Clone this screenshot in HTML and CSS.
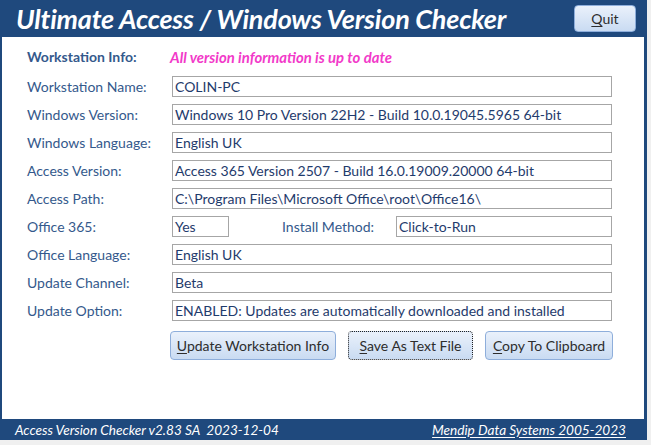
FILE: index.html
```html
<!DOCTYPE html>
<html>
<head>
<meta charset="utf-8">
<link rel="stylesheet" href="styles.css">
</head>
<body>
<div class="frame">
  <header class="titlebar">
    <h1 class="title">Ultimate Access / Windows Version Checker</h1>
    <button class="btn quit"><u>Q</u>uit</button>
  </header>
  <main class="content">
    <div class="grid">
      <div class="label head">Workstation Info:</div>
      <div class="status">All version information is up to date</div>

      <div class="label">Workstation Name:</div>
      <div class="box">COLIN-PC</div>

      <div class="label">Windows Version:</div>
      <div class="box">Windows 10 Pro Version 22H2 - Build 10.0.19045.5965 64-bit</div>

      <div class="label">Windows Language:</div>
      <div class="box">English UK</div>

      <div class="label">Access Version:</div>
      <div class="box">Access 365 Version 2507 - Build 16.0.19009.20000 64-bit</div>

      <div class="label">Access Path:</div>
      <div class="box">C:\Program Files\Microsoft Office\root\Office16\</div>

      <div class="label">Office 365:</div>
      <div class="split">
        <div class="box small">Yes</div>
        <div class="label inner">Install Method:</div>
        <div class="box grow">Click-to-Run</div>
      </div>

      <div class="label">Office Language:</div>
      <div class="box">English UK</div>

      <div class="label">Update Channel:</div>
      <div class="box">Beta</div>

      <div class="label">Update Option:</div>
      <div class="box">ENABLED: Updates are automatically downloaded and installed</div>
    </div>
    <div class="actions">
      <button class="btn b1"><u>U</u>pdate Workstation Info</button>
      <button class="btn b2 focus"><u>S</u>ave As Text File</button>
      <button class="btn b3"><u>C</u>opy To Clipboard</button>
    </div>
  </main>
  <footer class="footer">
    <span class="ver">Access Version Checker v2.83 SA&nbsp; 2023-12-04</span>
    <span class="credit">Mendip Data Systems 2005-2023</span>
  </footer>
</div>
</body>
</html>
```
FILE: styles.css
```css
html, body {
  margin: 0;
  padding: 0;
  background: #f0f0f0;
  width: 651px;
  height: 445px;
  overflow: hidden;
}
body {
  font-family: Lato, "Open Sans", sans-serif;
}
.frame {
  width: 642px;
  height: 440px;
  border-left: 2px solid #1f497d;
  border-right: 3px solid #1f497d;
  display: flex;
  flex-direction: column;
  background: #fff;
}
.titlebar {
  height: 37px;
  background: #1f497d;
  display: flex;
  align-items: flex-start;
  justify-content: space-between;
  flex: none;
}
.title {
  margin: 3px 0 0 14px;
  color: #fff;
  font-size: 27px;
  font-weight: 700;
  font-style: italic;
  line-height: 31px;
  letter-spacing: -0.2px;
}
.btn {
  font-family: Lato, "Open Sans", sans-serif;
  font-size: 14px;
  color: #2d2d2d;
  background: linear-gradient(#eaf1fb, #c9dbf2);
  border: 1px solid #8eaedb;
  border-radius: 4px;
  padding: 0;
  cursor: default;
}
.btn u { text-underline-offset: 2px; }
.quit {
  margin: 5px 8px 0 0;
  width: 62px;
  height: 27px;
}
.content {
  flex: 1;
  padding: 11px 0 0 25px;
}
.grid {
  display: grid;
  grid-template-columns: 145px 440px;
  grid-auto-rows: 21px;
  row-gap: 7px;
  align-items: center;
}
.head {
  font-weight: 700;
  color: #1f3864;
}
.status {
  color: #f23ac9;
  font-weight: 700;
  font-style: italic;
  margin-left: -2px;
  font-size: 14.9px !important;
}
.grid > .head, .grid > .status { margin-bottom: 4px; }
.label {
  font-size: 14px;
  color: #34598c;
  white-space: nowrap;
}
.head, .status { font-size: 14px; }
.box {
  height: 21px;
  box-sizing: border-box;
  border: 1px solid #a6a6a6;
  padding: 0 2px;
  font-size: 14px;
  line-height: 20px;
  color: #1f3b6c;
  white-space: nowrap;
  overflow: hidden;
}
.split {
  display: flex;
  align-items: center;
  height: 21px;
}
.small { width: 57px; flex: none; }
.inner { margin-left: 53px; width: 114px; flex: none; }
.grow { flex: 1; }
.actions {
  display: flex;
  gap: 12px;
  margin: 10px 0 0 143px;
}
.actions .btn { height: 29px; }
.b1 { width: 166px; }
.b2 { width: 125px; }
.b3 { width: 128px; }
.focus {
  border: 1px dotted #222;
}
.footer {
  height: 21px;
  flex: none;
  background: #1f497d;
  color: #fff;
  font-style: italic;
  font-size: 13.6px;
  display: flex;
  align-items: center;
  justify-content: space-between;
  padding: 0 18px 0 13px;
}
.credit { text-decoration: underline; text-underline-offset: 2px; }
```
